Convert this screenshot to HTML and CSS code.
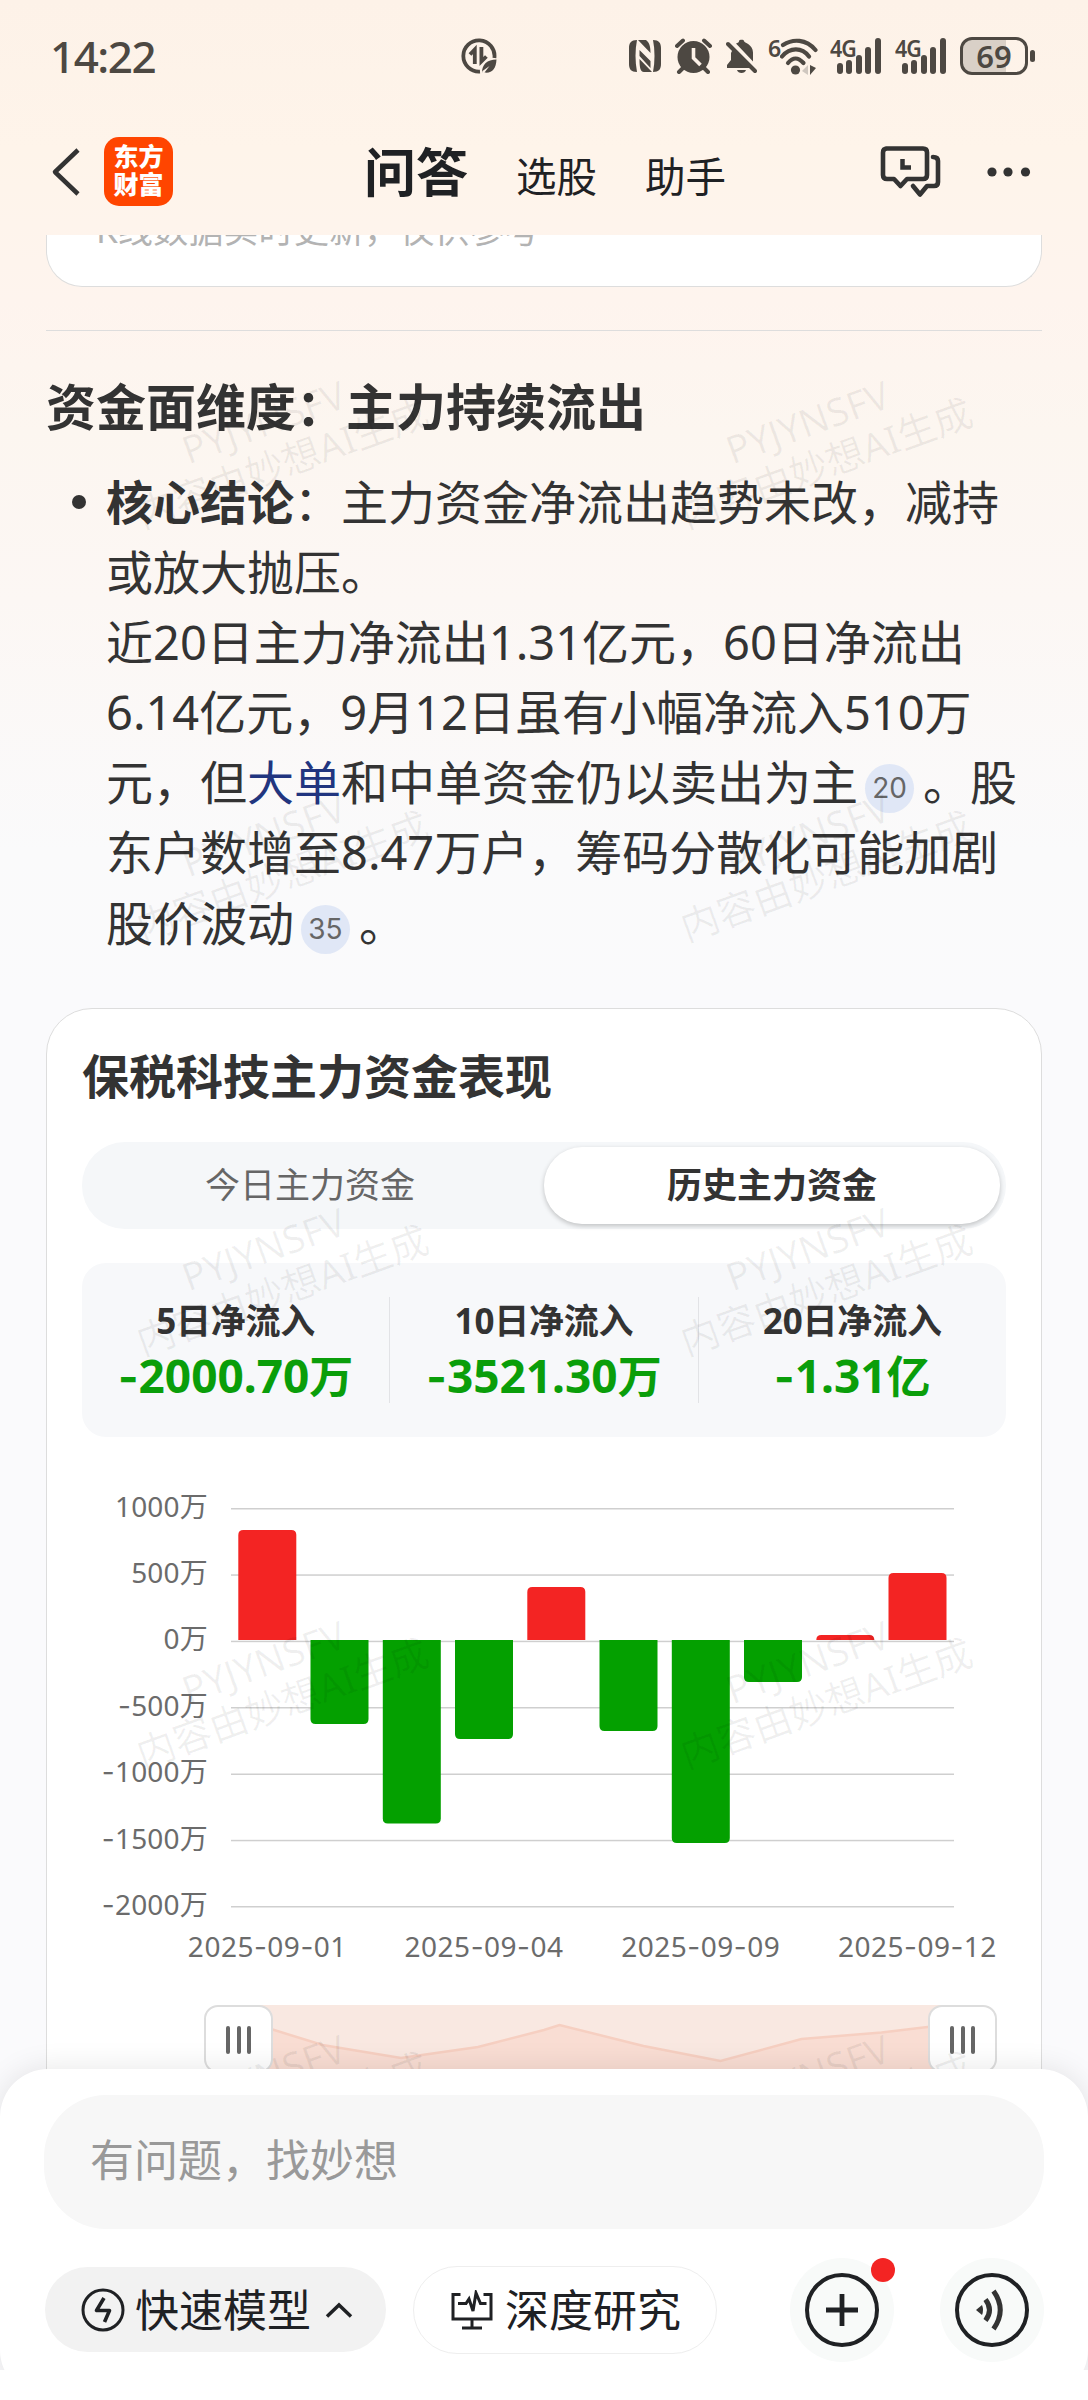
FILE: index.html
```html
<!DOCTYPE html>
<html lang="zh-CN">
<head>
<meta charset="utf-8">
<title>问答</title>
<link rel="stylesheet" href="styles.css">
</head>
<body>
<div class="screen">
  <div class="status">
    <span class="clock">14:22</span>
    <svg class="saver" width="36" height="36" viewBox="0 0 36 36" fill="none" stroke="#4d4842">
      <path d="M19 33.6A15.6 15.6 0 1 1 33.4 20" stroke-width="3.8"/>
      <path d="M13.8 26V11.5L9 16.5" stroke-width="3.8"/>
      <path d="M20.4 9v14.5l5-5" stroke-width="3.8"/>
      <path d="M21 35c0-9 5-13 14.500-13.500C35 31 31 35.500 23.500 34.500l5-6.500-7 5z" fill="#4d4842" stroke="none"/>
    </svg>
    <div class="icons">
      <svg width="32" height="34" viewBox="0 0 32 34">
        <path d="M8 1C2 1 0 4 0 9v16c0 5 2 8 8 8C6 22 6 11 8 1z" fill="#4d4842"/>
        <path d="M24 1c6 0 8 3 8 8v16c0 5-2 8-8 8 2-10 2-22 0-32z" fill="#4d4842"/>
        <path d="M9 1h8c4 3 4.500 8 4.500 13z M10.500 11l11 11v7L10.500 17z M10.500 20L23 33h-8c-4 0-4.500-6-4.500-13z" fill="#4d4842"/>
      </svg>
      <svg width="37" height="36" viewBox="0 0 37 36">
        <circle cx="18.500" cy="19" r="16" fill="#4d4842"/>
        <path d="M18.500 10v10l7 7" fill="none" stroke="#fdf2e8" stroke-width="3.600"/>
        <path d="M2 8l6-5.500M35 8l-6-5.500M8 30l-4 4M29 30l4 4" stroke="#4d4842" stroke-width="4" stroke-linecap="round"/>
      </svg>
      <svg width="31" height="36" viewBox="0 0 31 36">
        <path d="M7 11L26 30H1v-3l4-5V15z" fill="#4d4842"/>
        <path d="M10 5.500c2-1 3-1 3-2.500s5-2 5 0 9 3 9 11.500v9z" fill="#4d4842"/>
        <path d="M11 32h9c-1 4-8 4-9 0z" fill="#4d4842"/>
        <path d="M2 6l27 27" stroke="#4d4842" stroke-width="4" stroke-linecap="round"/>
      </svg>
      <div class="wifi"><span>6</span>
        <svg width="38" height="37" viewBox="0 0 38 37" fill="none" stroke="#4d4842" stroke-width="4.200" stroke-linecap="round">
          <path d="M3 7c10-6.500 23-6 32.500 5"/><path d="M2 18.500c8-9.500 20-9.500 27 0" /><path d="M8 25c5-6 10-6 15.500 0"/>
          <circle cx="15.500" cy="32" r="4.600" fill="#4d4842" stroke="none"/>
          <path d="M28 27v10l-6-4z" fill="#cfc7bf" stroke="none"/><path d="M30 27v10l6-7z" fill="#4d4842" stroke="none"/>
        </svg>
      </div>
      <div class="signal"><span>4G</span><i></i><i></i><i></i><i></i><i></i></div>
      <div class="signal"><span>4G</span><i></i><i></i><i></i><i></i><i></i></div>
      <div class="battery"><b>69</b></div>
    </div>
  </div>

  <div class="nav">
    <svg class="back" width="30" height="52" viewBox="0 0 30 52" fill="none" stroke="#333" stroke-width="4.500" stroke-linejoin="round"><path d="M27 4L4 26l23 22"/></svg>
    <div class="logo">东方<br>财富</div>
    <div class="tabs"><b>问答</b><span>选股</span><span>助手</span></div>
    <svg class="chat" width="62" height="54" viewBox="0 0 62 54" fill="none" stroke="#333" stroke-width="4.600" stroke-linejoin="round" stroke-linecap="round">
      <path d="M6 3.500h37q4 0 4 4V30q0 4-4 4H27l-6.500 7L14 34H7q-4 0-4-4V7.500q0-4 4-4z"/>
      <path d="M53 12q5 0 5 4v21q0 4-4 4h-7l-7 8.500L33 41"/>
      <path d="M22.500 14v8.500H31" stroke-linecap="butt" stroke-linejoin="miter" stroke-width="4.500"/>
    </svg>
    <svg class="more" width="44" height="10" viewBox="0 0 44 10" fill="#333"><circle cx="5" cy="5" r="4.600"/><circle cx="21" cy="5" r="4.600"/><circle cx="38.500" cy="5" r="4.600"/></svg>
  </div>

  <div class="content">
    <div class="prev"><p>K线数据实时更新，仅供参考</p></div>
    <hr>
    <h2>资金面维度：主力持续流出</h2>
    <ul><li><b>核心结论</b>：主力资金净流出趋势未改，减持<br>或放大抛压。<br>近20日主力净流出1.31亿元，60日净流出<br>6.14亿元，9月12日虽有小幅净流入510万<br>元，但<a>大单</a>和中单资金仍以卖出为主<sup>20</sup>。股<br>东户数增至8.47万户，筹码分散化可能加剧<br>股价波动<sup>35</sup>。</li></ul>

    <div class="card">
      <h3>保税科技主力资金表现</h3>
      <div class="switch"><span>今日主力资金</span><b>历史主力资金</b></div>
      <div class="stats">
        <div><span>5日净流入</span><b><i>-</i>2000.70<em>万</em></b></div>
        <div><span>10日净流入</span><b><i>-</i>3521.30<em>万</em></b></div>
        <div><span>20日净流入</span><b><i>-</i>1.31<em>亿</em></b></div>
      </div>
      <div class="chart">
        <div class="yaxis"><span>1000万</span><span>500万</span><span>0万</span><span><i>-</i>500万</span><span><i>-</i>1000万</span><span><i>-</i>1500万</span><span><i>-</i>2000万</span></div>
        <svg class="plot" width="723" height="402" viewBox="0 0 723 402">
          <g fill="#cfcfcf">
            <rect y="1" width="723" height="1.500"/><rect y="67.300" width="723" height="1.500"/><rect y="133.700" width="723" height="1.500"/><rect y="200" width="723" height="1.500"/><rect y="266.500" width="723" height="1.500"/><rect y="332.800" width="723" height="1.500"/><rect y="399" width="723" height="1.500"/>
          </g>
          <g fill="#f32423">
            <path d="M7.300 133V28q0-5 5-5h48q5 0 5 5v105z"/>
            <path d="M296.300 133V85q0-5 5-5h48q5 0 5 5v48z"/>
            <path d="M585.300 133q0-5 5-5h48q5 0 5 5z"/>
            <path d="M657.500 133V71q0-5 5-5h48q5 0 5 5v62z"/>
          </g>
          <g fill="#04a000">
            <path d="M79.500 133v79q0 5 5 5h48q5 0 5-5v-79z"/>
            <path d="M151.800 133v178.500q0 5 5 5h48q5 0 5-5V133z"/>
            <path d="M224 133v94q0 5 5 5h48q5 0 5-5v-94z"/>
            <path d="M368.500 133v86q0 5 5 5h48q5 0 5-5v-86z"/>
            <path d="M440.800 133v198q0 5 5 5h48q5 0 5-5V133z"/>
            <path d="M513 133v37q0 5 5 5h48q5 0 5-5v-37z"/>
          </g>
        </svg>
      </div>
      <div class="xaxis"><span>2025<i>-</i>09<i>-</i>01</span><span>2025<i>-</i>09<i>-</i>04</span><span>2025<i>-</i>09<i>-</i>09</span><span>2025<i>-</i>09<i>-</i>12</span></div>
      <div class="range">
        <div class="handle"><i></i><i></i><i></i></div>
        <svg width="723" height="100" viewBox="0 0 723 100">
          <rect width="723" height="100" fill="#f9e8e1"/>
          <path d="M0 14L33.500 24.500 83.500 40 162 53 239 42 305 25 320.500 20 404.500 41 481.500 56 562.500 34 642.500 27.500 688.500 22 723 19V100H0z" fill="#f9ddd3"/>
          <path d="M0 14L33.500 24.500 83.500 40 162 53 239 42 305 25 320.500 20 404.500 41 481.500 56 562.500 34 642.500 27.500 688.500 22 723 19" fill="none" stroke="#f6cfc1" stroke-width="2.500"/>
        </svg>
        <div class="handle"><i></i><i></i><i></i></div>
      </div>
    </div>

    <div class="marks">
      <p>PYJYNSFV<br>内容由妙想AI生成</p><p>PYJYNSFV<br>内容由妙想AI生成</p>
      <p>PYJYNSFV<br>内容由妙想AI生成</p><p>PYJYNSFV<br>内容由妙想AI生成</p>
      <p>PYJYNSFV<br>内容由妙想AI生成</p><p>PYJYNSFV<br>内容由妙想AI生成</p>
      <p>PYJYNSFV<br>内容由妙想AI生成</p><p>PYJYNSFV<br>内容由妙想AI生成</p>
      <p>PYJYNSFV<br>内容由妙想AI生成</p><p>PYJYNSFV<br>内容由妙想AI生成</p>
    </div>
  </div>

  <div class="sheet">
    <div class="input">有问题，找妙想</div>
    <div class="actions">
      <div class="chip fast">
        <svg width="44" height="44" viewBox="0 0 44 44" fill="none" stroke="#1f2124"><circle cx="22" cy="22" r="20" stroke-width="3"/><path d="M23 10l-7.500 12.500h13L23.500 34" stroke-width="3.600" stroke-linejoin="round"/></svg>
        <span>快速模型</span>
        <svg class="caret" width="28" height="16" viewBox="0 0 28 16" fill="none" stroke="#1f2124" stroke-width="3.500"><path d="M2 14.500L14 3l12 11.500"/></svg>
      </div>
      <div class="chip deep">
        <svg width="42" height="40" viewBox="0 0 42 40" fill="none" stroke="#1f2124" stroke-width="3"><path d="M9.500 4.500H2v24.500h38V4.500h-7.500M21 29v8.500M11 38h20M7 13.500h8l3-4.500 4 12L25 3l4.500 10.500h6"/></svg>
        <span>深度研究</span>
      </div>
      <div class="round plus"><svg width="74" height="74" viewBox="0 0 74 74" fill="none" stroke="#1f2124"><circle cx="37" cy="37" r="35" stroke-width="4"/><path d="M37 21v32M21 37h32" stroke-width="4.800"/></svg><i></i></div>
      <div class="round"><svg width="74" height="74" viewBox="0 0 74 74" fill="none" stroke="#333"><circle cx="37" cy="37" r="35" stroke="#1f2124" stroke-width="4"/><path d="M21 37l6-5q2 5 0 10z" fill="#333" stroke="none"/><path d="M30.500 26.500Q38.500 37 30.500 47.500M38.500 18Q52 37 38.500 56" stroke-width="5"/></svg></div>
    </div>
  </div>
  <div class="foot"></div>
</div>
</body>
</html>
```
FILE: styles.css
```css
* { box-sizing: border-box; margin: 0; padding: 0; }
body { font-family: "Noto Sans", "Noto Sans CJK SC", sans-serif; color: #333; }
i, em { font-style: normal; }
.screen { width: 1088px; height: 2400px; overflow: hidden; display: flex; flex-direction: column;
  background: linear-gradient(#fdf2e8 0, #fef4ea 150px, #fef4ee 300px, #fcf6f0 430px, #fcf7f4 600px, #fafafb 850px, #fafafc 1000px); }

.status { height: 112px; flex: none; padding: 0 53px 0 50px; display: flex; align-items: center; color: #4d4842; }
.clock { font-size: 44px; font-weight: 500; letter-spacing: -1.5px; line-height: 60px; width: 411px; }
.icons { margin-left: auto; display: flex; align-items: center; }
.icons > * + * { margin-left: 14px; }
.icons .wifi { margin-left: 11px; }
.wifi { display: flex; width: 51px; height: 37px; }
.wifi span { font-size: 23px; line-height: 20px; font-weight: 600; width: 12px; }
.signal { position: relative; width: 51px; height: 36px; padding-left: 7px; display: flex; align-items: flex-end; gap: 3.4px; }
.icons .signal { margin-left: 11px; }
.icons .signal + .signal { margin-left: 14px; }
.signal span { position: absolute; left: 0; top: -1px; font-size: 23px; font-weight: 600; line-height: 22px; letter-spacing: -1px; transform: scaleX(.93); transform-origin: left; }
.signal i { width: 6px; border-radius: 3px; background: #4d4842; height: 11px; }
.signal i:nth-of-type(2) { height: 14px; }
.signal i:nth-of-type(3) { height: 19px; }
.signal i:nth-of-type(4) { height: 27px; }
.signal i:nth-of-type(5) { height: 36px; }
.battery { position: relative; width: 68px; height: 38px; border: 3px solid #4d4842; border-radius: 12px; display: flex; align-items: center; justify-content: center;
  background: linear-gradient(90deg, #d9d0c7 70%, transparent 70%); margin-right: 7px; }
.battery b { font-size: 31px; line-height: 31px; font-weight: 600; }
.battery::after { content: ""; position: absolute; right: -10px; top: 10px; width: 5px; height: 12px; border-radius: 3px; background: #4d4842; }

.nav { height: 123px; flex: none; display: flex; align-items: center; padding: 0 57px 4px 51px; }
.logo { width: 69px; height: 69px; margin-left: 23px; border-radius: 15px; background: #ff4500; color: #fff; font-weight: 900; font-size: 25px; line-height: 28px; padding-top: 5px; text-align: center; }
.tabs { margin-left: 191px; padding-top: 5px; display: flex; align-items: baseline; color: #1f2124; font-size: 40.500px; line-height: 60px; }
.tabs b { font-size: 52px; margin-right: 48px; }
.tabs span + span { margin-left: 48px; }
.chat { margin-left: auto; }
.more { margin-left: 45px; }

.content { position: relative; height: 1880px; flex: none; overflow: hidden; padding: 0 46px; }
.prev { height: 52px; border: 1px solid #ddd; border-top: 0; border-radius: 0 0 36px 36px; background: #fff; overflow: hidden; padding-left: 49px; }
.prev p { margin-top: -30px; font-size: 35.200px; line-height: 48px; color: #b3b3b3; }
hr { margin-top: 43px; border: 0; height: 1px; background: #ddd; }
h2 { margin-top: 41px; font-size: 50px; line-height: 70px; font-weight: 700; white-space: nowrap; }
ul { margin-top: 25px; list-style: none; }
li { position: relative; padding-left: 60px; font-size: 47px; line-height: 70.100px; white-space: nowrap; }
li::before { content: ""; position: absolute; left: 26px; top: 28px; width: 14px; height: 14px; border-radius: 50%; background: #333; }
a { color: #21357f; }
sup { display: inline-block; width: 49px; height: 49px; margin: -10px 9px -10px 7px; border-radius: 50%; background: #e0e7f6; color: #666; font-size: 28px; line-height: 48px; text-align: center; vertical-align: 2px; font-family: Inter, sans-serif; }

.card { height: 1200px; margin-top: 50px; border: 1px solid #ddd; border-radius: 46px; background: #fff; padding: 33px 35px 0; }
h3 { font-size: 47px; line-height: 68px; font-weight: 700; }
.switch { margin-top: 32px; height: 87px; border-radius: 43px; background: #f5f7f9; padding: 5px 6px; display: flex; font-size: 35px; text-align: center; line-height: 76px; }
.switch span { width: 456px; padding-right: 12px; color: #666; }
.switch b { width: 456px; background: #fff; border-radius: 38px; box-shadow: 0 2px 5px rgba(0,0,0,.22); font-weight: 700; }
.stats { margin-top: 34px; height: 174px; border-radius: 24px; background: #f7f8fa; padding: 34px 0; display: flex; text-align: center; }
.stats div { flex: 1; white-space: nowrap; }
.stats div + div { border-left: 1px solid #e2e3e6; }
.stats span { display: block; font-size: 35px; line-height: 48px; font-weight: 700; letter-spacing: -.2px; }
.stats b { display: block; font-size: 46px; line-height: 60px; color: #0a9e0a; }
.stats em { font-size: 44px; }
.stats i { font-family: Inter, sans-serif; font-size: 44px; }
.chart { margin-top: 70px; display: flex; font-size: 28px; color: #6b6b6b; }
.yaxis { width: 126px; margin: -21px 0 -42px; text-align: right; letter-spacing: .2px; }
.yaxis span { display: block; height: 66.400px; line-height: 40px; }
.yaxis i, .xaxis i { font-family: Inter, sans-serif; }
.plot { margin-left: 23px; margin-top: 0; flex: none; }
.xaxis { margin: 17px 0 0 77px; width: 867px; display: flex; font-size: 28px; line-height: 40px; color: #6b6b6b; }
.xaxis span { width: 216.700px; flex: none; text-align: center; letter-spacing: .5px; }
.range { margin: 38px 0 0 122px; width: 793px; display: flex; }
.range svg { flex: none; margin: 0 -34px; }
.handle { position: relative; z-index: 1; width: 69px; height: 68px; flex: none; border: 2px solid #ddd; border-radius: 14px; background: #fff; display: flex; gap: 6.500px; justify-content: center; padding-top: 19px; }
.handle i { width: 4px; height: 28px; border-radius: 2px; background: #666; }

.marks { position: absolute; z-index: 2; left: 0; top: 0; width: 1088px; display: grid; grid-template-columns: 544px 544px; grid-auto-rows: 413.600px; pointer-events: none; }
.marks p { width: 300px; height: 89px; margin: 162.500px 0 0 121px; text-align: center; white-space: nowrap; font-size: 38.500px; line-height: 44.500px; color: rgba(0,0,0,.06); transform: rotate(-20deg); font-weight: 400; }

.sheet { position: relative; z-index: 3; flex: none; margin-top: -46px; height: 329px; border-radius: 48px; background: #fff; box-shadow: 0 0 30px rgba(0,0,0,.1); padding: 26px 44px 0; }
.input { height: 134px; border-radius: 62px; background: #f7f7f7; padding-left: 46px; font-size: 44px; line-height: 130px; color: #999; }
.actions { margin-top: 28px; display: flex; align-items: center; height: 105px; color: #1f2124; font-size: 44px; line-height: 60px; }
.chip { display: flex; align-items: center; border-radius: 44px; white-space: nowrap; }
.fast { width: 341px; height: 85px; margin-left: 1px; padding-left: 36px; background: #f2f2f2; }
.fast span { margin-left: 10px; }
.caret { margin-left: 14px; }
.deep { width: 304px; height: 88px; margin-left: 27px; padding-left: 37px; border: 1px solid #eee; }
.deep span { margin-left: 12px; }
.round { position: relative; width: 104px; height: 104px; margin-left: auto; border-radius: 50%; background: #f8faf9; display: flex; align-items: center; justify-content: center; }
.plus { margin-left: 73px; }
.round i { position: absolute; right: -1px; top: 0; width: 24px; height: 24px; border-radius: 50%; background: #f32423; }
.foot { position: relative; z-index: 4; flex: none; height: 40px; margin-top: -28px; background: #fff; }
```
